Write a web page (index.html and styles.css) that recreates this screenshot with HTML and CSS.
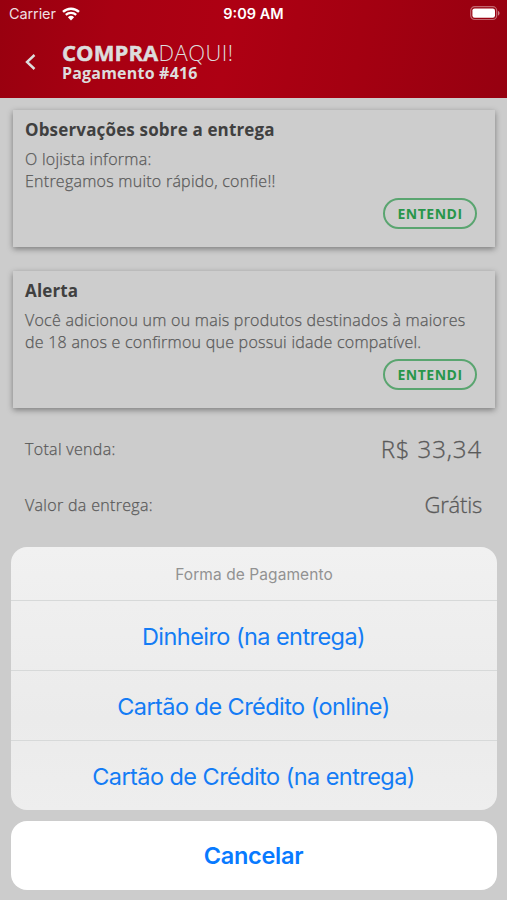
FILE: index.html
```html
<!DOCTYPE html>
<html lang="pt-BR">
  <head>
    <meta charset="UTF-8" />
    <meta name="viewport" content="width=device-width, initial-scale=1.0" />
    <title>Pagamento #416</title>
    <link rel="stylesheet" href="styles.css">
  </head>
  <body>
    <div class="screen">
      <header class="header">
        <div class="status-bar">
          <div class="carrier">
            <span>Carrier</span>
            <svg class="wifi" viewBox="0 0 18 14" width="18" height="14">
              <path d="M1 4.9a11.6 11.6 0 0 1 16 0" fill="none" stroke="#fff" stroke-width="2.4" />
              <path d="M3.8 7.9a7.5 7.5 0 0 1 10.4 0" fill="none" stroke="#fff" stroke-width="2.2" />
              <path d="M5.9 10.2a4.6 4.6 0 0 1 6.2 0L9 13.4z" fill="#fff" />
            </svg>
          </div>
          <span class="time">9:09 AM</span>
          <svg class="battery" viewBox="0 0 30 15" width="30" height="15">
            <rect x="0.7" y="0.7" width="26" height="12.8" rx="4" fill="none" stroke="#fff" stroke-opacity="0.4" stroke-width="1.2" />
            <rect x="2.4" y="2.4" width="22.6" height="9.4" rx="2.2" fill="#fff" />
            <path d="M28 5c2 .7 2 3.8 0 4.5z" fill="#fff" fill-opacity="0.5" />
          </svg>
        </div>
        <div class="nav">
          <svg class="back" viewBox="0 0 12 18" width="12" height="18">
            <path d="M10.5 2L3 9l7.5 7" fill="none" stroke="#ddd" stroke-width="2.4" />
          </svg>
          <div class="titles">
            <h1><b>COMPRA</b><span>DAQUI!</span></h1>
            <h2>Pagamento #416</h2>
          </div>
        </div>
      </header>

      <main class="content">
        <section class="card">
          <h3>Observações sobre a entrega</h3>
          <p>O lojista informa:<br />Entregamos muito rápido, confie!!</p>
          <button>ENTENDI</button>
        </section>

        <section class="card">
          <h3>Alerta</h3>
          <p>Você adicionou um ou mais produtos destinados à maiores<br />de 18 anos e confirmou que possui idade compatível.</p>
          <button>ENTENDI</button>
        </section>

        <div class="totals">
          <div class="row">
            <span class="label">Total venda:</span>
            <span class="value">R$ 33,34</span>
          </div>
          <div class="row">
            <span class="label">Valor da entrega:</span>
            <span class="value free">Grátis</span>
          </div>
        </div>
      </main>

      <div class="action-sheet">
        <div class="options">
          <div class="sheet-title">Forma de Pagamento</div>
          <button>Dinheiro (na entrega)</button>
          <button>Cartão de Crédito (online)</button>
          <button>Cartão de Crédito (na entrega)</button>
        </div>
        <button class="cancel">Cancelar</button>
      </div>
    </div>
  </body>
</html>
```
FILE: styles.css
```css
* {
  margin: 0;
  padding: 0;
  box-sizing: border-box;
}

body {
  font-family: "Open Sans", "Noto Sans", sans-serif;
  color: #5a5a5a;
  background: #ccc;
}

button {
  font-family: inherit;
  border: none;
  background: none;
  cursor: pointer;
}

.screen {
  position: relative;
  width: 507px;
  height: 900px;
  overflow: hidden;
  background: #ccc;
}

/* header */
.header {
  height: 98px;
  background: linear-gradient(100deg, #98000f 0%, #a80012 22%, #ae0013 45%, #a40011 70%, #960010 100%);
}

.status-bar {
  display: grid;
  grid-template-columns: 1fr auto 1fr;
  align-items: center;
  height: 27px;
  padding: 0 7px 0 9px;
  font-family: Inter, sans-serif;
  color: #fff;
}

.carrier {
  display: flex;
  align-items: center;
  gap: 6px;
  font-size: 14.5px;
  letter-spacing: -0.1px;
  color: #eedfe1;
}

.time {
  margin-right: 2px;
  font-size: 14.5px;
  font-weight: 600;
}

.battery {
  justify-self: end;
}

.nav {
  display: flex;
  align-items: center;
  height: 71px;
  padding: 0 24px 2px;
}

.titles {
  margin-left: 26px;
  color: #ddd;
}

h1 {
  font-size: 22px;
  line-height: 23px;
  font-weight: 300;
}

h1 b {
  font-weight: 700;
  letter-spacing: 0.1px;
  -webkit-text-stroke: 0.5px #ddd;
}

h1 span {
  letter-spacing: 0.5px;
}

h2 {
  font-size: 16px;
  line-height: 18px;
  font-weight: 700;
  letter-spacing: 0.2px;
}

/* cards */
.content {
  padding: 12px 12px 0 13px;
}

.card {
  display: flex;
  flex-direction: column;
  height: 137px;
  margin-bottom: 24px;
  padding: 8px 18px 18px 12px;
  background: #cdcdcd;
  box-shadow: 0 2px 6px rgba(0, 0, 0, 0.4);
}

h3 {
  font-size: 17px;
  line-height: 23px;
  font-weight: 700;
  letter-spacing: 0.16px;
  color: #404040;
}

.card p {
  margin-top: 7px;
  font-size: 16px;
  line-height: 22px;
  font-weight: 300;
  letter-spacing: 0.25px;
  -webkit-text-stroke: 0.25px #5a5a5a;
  white-space: nowrap;
}

.card button {
  align-self: flex-end;
  width: 94px;
  height: 31px;
  margin-top: auto;
  border: 2px solid #5aa570;
  border-radius: 16px;
  font-size: 14px;
  font-weight: 700;
  letter-spacing: 0.5px;
  color: #28964a;
}

.totals {
  margin-top: -11px;
}

.row {
  display: flex;
  justify-content: space-between;
  align-items: center;
  height: 56px;
  padding: 0 13px 0 12px;
}

.label {
  font-size: 16px;
  font-weight: 300;
  letter-spacing: 0.32px;
  -webkit-text-stroke: 0.25px #5a5a5a;
}

.value {
  margin-top: -2px;
  font-size: 24px;
  font-weight: 300;
  letter-spacing: 0.9px;
  -webkit-text-stroke: 0.3px #5a5a5a;
}

.free {
  font-size: 22px;
  letter-spacing: -0.2px;
}

/* bottom sheet, lies over the page */
.action-sheet {
  position: absolute;
  left: 11px;
  right: 10px;
  bottom: 10px;
  font-family: Inter, sans-serif;
}

.options {
  overflow: hidden;
  margin-bottom: 11px;
  border-radius: 16px;
  background: linear-gradient(#f1f1f1, #ebebeb 65%, #eee);
}

.sheet-title {
  height: 53px;
  line-height: 55px;
  text-align: center;
  font-size: 15.5px;
  letter-spacing: 0.08px;
  color: #929292;
}

.options button {
  display: block;
  width: 100%;
  height: 70px;
  padding: 1px 1px 0 0;
  border-top: 1px solid #d7d9d9;
  font-size: 23.5px;
  letter-spacing: -0.56px;
  color: #147cf5;
}

.action-sheet .cancel {
  display: block;
  width: 100%;
  height: 69px;
  padding-right: 1px;
  border-radius: 16px;
  background: #fff;
  font-size: 23.5px;
  font-weight: 600;
  letter-spacing: -0.3px;
  color: #087aff;
}
```
